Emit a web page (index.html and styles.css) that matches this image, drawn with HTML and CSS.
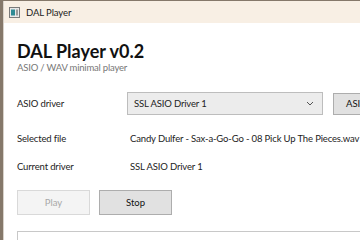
FILE: index.html
```html
<!DOCTYPE html>
<html lang="en">

<head>
    <meta charset="utf-8">
    <title>DAL Player</title>
    <link rel="stylesheet" href="styles.css">
</head>

<body>
    <div class="vindue">
        <div class="titellinje">
            <svg class="ikon" width="11" height="11" viewBox="0 0 11 11">
                <rect x="0.5" y="0.5" width="10" height="10" fill="#e8e8e8" stroke="#7a7a7a" />
                <rect x="2" y="2.5" width="4" height="6" fill="#2e8a94" />
                <rect x="7" y="2.5" width="2" height="6" fill="#9a9a9a" />
            </svg>
            <span>DAL Player</span>
        </div>

        <main class="indhold">
            <h1>DAL Player v0.2</h1>
            <p class="undertitel">ASIO / WAV minimal player</p>

            <div class="raekke driver">
                <label class="etiket">ASIO driver</label>
                <div class="combo">
                    <span>SSL ASIO Driver 1</span>
                    <svg width="8" height="5" viewBox="0 0 8 5">
                        <path d="M1 1 L4 4 L7 1" fill="none" stroke="#555" stroke-width="1" />
                    </svg>
                </div>
                <button class="knap">ASIO Panel</button>
            </div>

            <div class="raekke fil">
                <span class="etiket">Selected file</span>
                <span class="vaerdi">Candy Dulfer - Sax-a-Go-Go - 08 Pick Up The Pieces.wav</span>
            </div>

            <div class="raekke">
                <span class="etiket">Current driver</span>
                <span class="vaerdi">SSL ASIO Driver 1</span>
            </div>

            <div class="knapper">
                <button class="knap" disabled>Play</button>
                <button class="knap stop">Stop</button>
            </div>

            <div class="log"></div>
        </main>
    </div>
</body>

</html>
```

FILE: styles.css
```css
* {
    box-sizing: border-box;
}

html,
body {
    margin: 0;
    height: 240px;
    overflow: hidden;
}

body {
    font-family: Lato, "Open Sans", sans-serif;
    background-color: #85786a;
    padding: 1px 0 0 3px;
}

.vindue {
    background-color: white;
    height: 100%;
    border-left: 1px solid #d8d2ca;
    overflow: hidden;
}

.titellinje {
    height: 22px;
    background-color: #f8efe4;
    display: flex;
    align-items: center;
    gap: 6px;
    padding-left: 5px;
    font-size: 9.5px;
    letter-spacing: -0.1px;
    color: #1a1a1a;
}

.ikon {
    flex-shrink: 0;
}

.indhold {
    padding: 17px 0 0 13px;
}

h1 {
    margin: 0;
    font-size: 18px;
    font-weight: 700;
    line-height: 22px;
    color: #111;
}

.undertitel {
    margin: 0;
    font-size: 9.5px;
    letter-spacing: -0.2px;
    line-height: 12px;
    color: #777;
}

.raekke {
    display: flex;
    align-items: center;
    height: 15px;
    margin-top: 13px;
    font-size: 9.5px;
    letter-spacing: -0.15px;
    color: #222;
    white-space: nowrap;
}

.raekke.driver {
    height: 23px;
    margin-top: 18px;
}

.raekke.fil {
    margin-top: 16px;
}

.etiket {
    width: 113px;
    flex-shrink: 0;
}

.combo {
    width: 196px;
    height: 23px;
    flex-shrink: 0;
    margin-left: -3px;
    border: 1px solid #bdbdbd;
    background-color: #ececec;
    display: flex;
    align-items: center;
    justify-content: space-between;
    padding: 0 8px 0 6px;
}

.knap {
    font-family: inherit;
    font-size: 9.5px;
    height: 22px;
    padding: 0 12px;
    border: 1px solid #adadad;
    background-color: #e1e1e1;
    color: #111;
    white-space: nowrap;
}

.driver .knap {
    margin-left: 10px;
    flex-shrink: 0;
}

.knapper {
    display: flex;
    gap: 9px;
    margin-top: 16px;
}

.knapper .knap {
    width: 73px;
    height: 25px;
}

.knap:disabled {
    background-color: #f4f4f4;
    border-color: #d9d9d9;
    color: #a8a8a8;
}

.log {
    margin-top: 16px;
    height: 40px;
    border: 1px solid #c8c8c8;
    border-right: none;
}
```
